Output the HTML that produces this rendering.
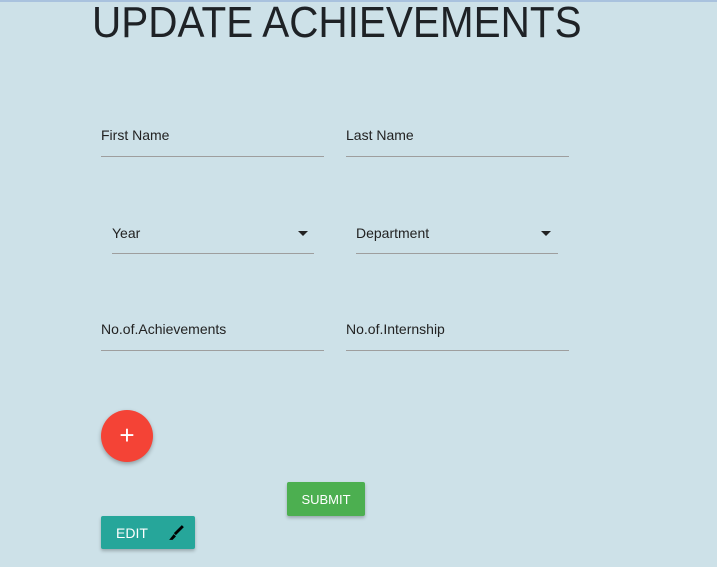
<!DOCTYPE html>
<html><head><style>
*{margin:0;padding:0;box-sizing:border-box}
body{width:717px;height:567px;background:#cde1e8;font-family:"Liberation Sans",sans-serif;position:relative;overflow:hidden}
.top{position:absolute;left:0;top:0;width:717px;height:2px;background:#a9c2de}
.t{position:absolute;left:92px;top:1px;font-size:44px;color:#1e2226;transform:scaleX(0.92);transform-origin:left top;white-space:nowrap;line-height:44px}
.f{position:absolute;height:1px;background:#9e9e9e}
.l{position:absolute;font-size:14px;color:#222}
.ar{position:absolute;width:0;height:0;border-left:5px solid transparent;border-right:5px solid transparent;border-top:5px solid #222}
.btn{position:absolute;color:#fff;font-size:13px;display:flex;align-items:center;border-radius:2px;box-shadow:0 2px 3px rgba(0,0,0,.25)}
</style></head><body>
<div class="top"></div>
<div class="t">UPDATE ACHIEVEMENTS</div>
<div class="l" style="left:101px;top:127px">First Name</div><div class="f" style="left:101px;top:156px;width:223px"></div>
<div class="l" style="left:346px;top:127px">Last Name</div><div class="f" style="left:346px;top:156px;width:223px"></div>
<div class="l" style="left:112px;top:225px">Year</div><div class="ar" style="left:298px;top:231px"></div><div class="f" style="left:112px;top:253px;width:202px"></div>
<div class="l" style="left:356px;top:225px">Department</div><div class="ar" style="left:541px;top:231px"></div><div class="f" style="left:356px;top:253px;width:202px"></div>
<div class="l" style="left:101px;top:321px">No.of.Achievements</div><div class="f" style="left:101px;top:350px;width:223px"></div>
<div class="l" style="left:346px;top:321px">No.of.Internship</div><div class="f" style="left:346px;top:350px;width:223px"></div>
<div style="position:absolute;left:101px;top:410px;width:52px;height:52px;border-radius:50%;background:#f44336;box-shadow:0 2px 4px rgba(0,0,0,.3);color:#fff;font-size:26px;text-align:center;line-height:50px">+</div>
<div class="btn" style="left:287px;top:482px;width:78px;height:34px;background:#4caf50;justify-content:center">SUBMIT</div>
<div class="btn" style="left:101px;top:516px;width:94px;height:33px;background:#26a69a;padding-left:15px;font-size:14px">EDIT
<svg style="margin-left:20px" width="16" height="16" viewBox="0 0 14 14"><path d="M13 1 L6 8" stroke="#000" stroke-width="2.5"/><path d="M5 8 L7 10 L4 13 L1 13 Z" fill="#000"/></svg></div>
</body></html>
